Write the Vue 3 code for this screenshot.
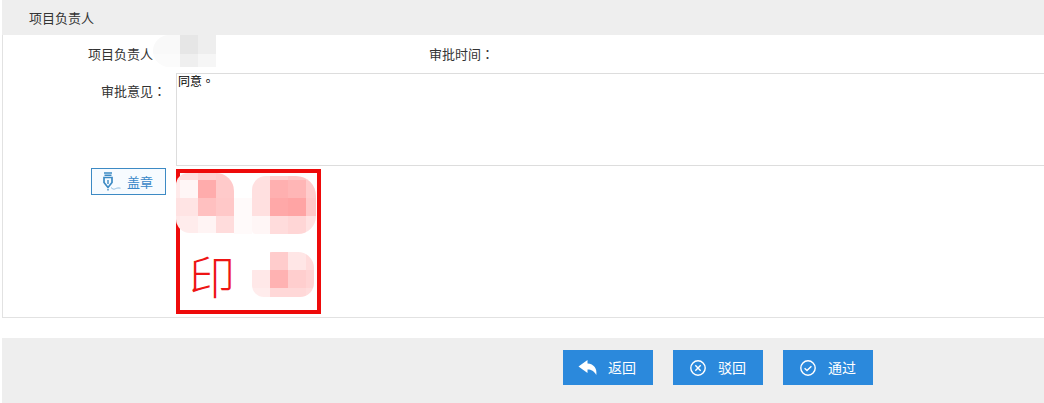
<template>
  <div class="page">
    <div class="panel-head">项目负责人</div>
    <div class="panel-body">
      <div class="row info-row">
        <span class="label name-label">项目负责人</span>
        <div class="name-value">
          <div class="mosaic name-mosaic" :style="gridStyle(nameMosaic)">
            <i v-for="(c, i) in nameMosaic.cells" :key="i" :style="{ background: c }"></i>
          </div>
        </div>
        <span class="label">审批时间<span class="colon">：</span></span>
      </div>
      <div class="row opinion-row">
        <span class="label opinion-label">审批意见<span class="colon">：</span></span>
        <textarea class="opinion" readonly>同意。</textarea>
      </div>
      <div class="row stamp-row">
        <div class="stamp-side">
          <button class="stamp-btn">
            <svg width="18" height="19" viewBox="0 0 18 19" fill="none" stroke="#3d8ac4">
              <path d="M1 1h8M1.500 3.200h7" stroke-width="1.500" />
              <path d="M1 5.500h8v5L5 15.500 1 10.500z" stroke-width="1.700" stroke-linejoin="miter" />
              <path d="M5 8v4" stroke-width="1.400" />
              <path d="M5 17v1.500" stroke-width="1.400" />
              <path d="M8 15.500c1.600 1.800 3 2 4.500 1.200s3-.9 5-.5" stroke="#8dbce0" stroke-width="1" />
            </svg>
            <span>盖章</span>
          </button>
        </div>
        <div class="seal">
          <div
            v-for="(m, n) in sealMosaics"
            :key="n"
            class="mosaic"
            :class="m.cls"
            :style="gridStyle(m)"
          >
            <i v-for="(c, i) in m.cells" :key="i" :style="{ background: c }"></i>
          </div>
          <div class="seal-gap"></div>
          <span class="seal-char">印</span>
        </div>
      </div>
    </div>
    <div class="footer">
      <button class="action" v-for="b in actions" :key="b.text">
        <span class="action-icon">
          <svg v-if="b.icon === 'back'" width="20" height="15" viewBox="0 0 20 15">
            <path d="M9.500 0 .5 6.500l9 6.500V9.500c3.600-.1 6.400 1.200 8.800 5.500C19.300 8.500 16 4 9.500 3.500z" fill="#fff" />
          </svg>
          <svg v-else-if="b.icon === 'close'" width="16" height="16" viewBox="0 0 16 16" fill="none" stroke="#fff" stroke-width="1.400">
            <circle cx="8" cy="8" r="7.200" />
            <path d="M5.300 5.300l5.400 5.400M10.700 5.300l-5.400 5.400" />
          </svg>
          <svg v-else width="16" height="16" viewBox="0 0 16 16" fill="none" stroke="#fff" stroke-width="1.400">
            <circle cx="8" cy="8" r="7.200" />
            <path d="M4.600 8.200l2.400 2.300 4.400-4.200" />
          </svg>
        </span>
        <span class="action-text">{{ b.text }}</span>
      </button>
    </div>
  </div>
</template>

<script setup>
const actions = [
  { text: '返回', icon: 'back' },
  { text: '驳回', icon: 'close' },
  { text: '通过', icon: 'check' },
]

// pixelated blur over the private bits of the seal and the name
const nameMosaic = {
  cols: [27, 18, 18],
  rows: [19, 13],
  cells: ['#f9f9f9', '#e6e6e6', '#eeeeee', '#fbfbfb', '#efefef', '#f6f6f6'],
}

const sealMosaics = [
  {
    cls: 'seal-a',
    cols: [4, 18, 18, 18],
    rows: [7, 18, 18, 17],
    cells: [
      '#ffe2e2', '#ffdede', '#ffd0d0', '#ffcccc',
      '#ffeaea', '#fff6f6', '#ffacac', '#ffcaca',
      '#ffe2e2', '#ffe4e4', '#ffc0c0', '#ffc8c8',
      '#ffe8e8', '#ffecec', '#fff4f4', '#ffdcdc',
    ],
  },
  {
    cls: 'seal-b',
    cols: [18, 18, 18, 10],
    rows: [4, 18, 18, 18],
    cells: [
      '#ffe4e4', '#ffd0d0', '#ffc8c8', '#ffd4d4',
      '#ffe0e0', '#ffb0b0', '#ffb6b6', '#ffcccc',
      '#ffe0e0', '#ffa8a8', '#ffa4a4', '#ffc8c8',
      '#fff6f6', '#ffdcdc', '#ffd6d6', '#ffe2e2',
    ],
  },
  {
    cls: 'seal-c',
    cols: [18, 18, 18, 8],
    rows: [18, 18, 9],
    cells: [
      '#fff', '#ffcccc', '#ffe6e6', '#ffdcdc',
      '#ffe8e8', '#ffb2b2', '#ffcece', '#ffd4d4',
      '#ffecec', '#ffd8d8', '#ffd8d8', '#ffdcdc',
    ],
  },
]

const gridStyle = (m) => ({
  gridTemplateColumns: m.cols.map((w) => w + 'px').join(' '),
  gridTemplateRows: m.rows.map((h) => h + 'px').join(' '),
})
</script>

<style>
html,
body {
  margin: 0;
  background: #fff;
  overflow: hidden;
}
</style>

<style scoped>
.page {
  width: 1044px;
  height: 403px;
  overflow: hidden;
  padding-left: 2px;
  box-sizing: border-box;
  font-family: "Noto Sans CJK SC", "Liberation Sans", sans-serif;
  font-size: 13px;
  color: #333;
}

.panel-head {
  height: 35px;
  line-height: 36px;
  padding-left: 27px;
  background: #eee;
}

.panel-body {
  height: 283px;
  box-sizing: border-box;
  border-left: 1px solid #e2e2e2;
  border-bottom: 1px solid #e2e2e2;
}

.row {
  display: flex;
}

.label {
  flex-shrink: 0;
  white-space: nowrap;
}

.colon {
  font-family: "Noto Sans CJK TC", sans-serif;
}

.info-row {
  height: 38px;
  align-items: flex-start;
  line-height: 38px;
}

.name-label {
  width: 150px;
  text-align: right;
}

.name-value {
  width: 276px;
  height: 32px;
  flex-shrink: 0;
}

.mosaic {
  display: grid;
  overflow: hidden;
}

.mosaic i {
  display: block;
}

.name-mosaic {
  width: 63px;
  height: 32px;
  border-radius: 16px 0 0 16px;
}

.opinion-row {
  height: 93px;
}

.opinion-label {
  width: 163px;
  padding-top: 9px;
  line-height: 18px;
  text-align: right;
}

.opinion {
  display: block;
  flex-shrink: 0;
  width: 900px;
  height: 93px;
  margin: 0 0 0 10px;
  padding: 0 1px;
  box-sizing: border-box;
  border: 1px solid #ddd;
  resize: none;
  outline: none;
  font-family: "Noto Sans CJK TC", sans-serif;
  font-size: 12px;
  line-height: 13px;
  color: #000;
}

.stamp-row {
  padding-top: 3px;
}

.stamp-side {
  width: 163px;
  padding-left: 88px;
  margin-top: -1px;
  box-sizing: border-box;
  flex-shrink: 0;
}

.stamp-btn {
  display: flex;
  align-items: center;
  gap: 6px;
  width: 75px;
  height: 27px;
  padding: 0 0 0 11px;
  box-sizing: border-box;
  border: 1px solid #3d8ac4;
  background: #f7fbff;
  font-family: inherit;
  font-size: 13px;
  color: #3a87c8;
}

.seal {
  position: relative;
  width: 145px;
  height: 145px;
  margin-left: 10px;
  box-sizing: border-box;
  border: 4px solid #ee0a0a;
}

.seal-a,
.seal-b,
.seal-c,
.seal-gap {
  position: absolute;
}

.seal-a {
  left: -4px;
  top: 0;
  width: 58px;
  height: 60px;
  border-radius: 12px 18px 0 14px;
}

.seal-b {
  left: 72px;
  top: 3px;
  width: 64px;
  height: 58px;
  border-radius: 14px 20px 18px 4px;
}

.seal-c {
  left: 72px;
  top: 79px;
  width: 62px;
  height: 45px;
  border-radius: 20px 16px 14px 12px;
}

.seal-gap {
  left: 54px;
  top: 25px;
  width: 18px;
  height: 36px;
  background: #fffafa;
}

.seal-char {
  position: absolute;
  left: 9px;
  top: 71px;
  font-size: 46px;
  font-weight: 300;
  line-height: 60px;
  color: #ee1414;
}

.footer {
  display: flex;
  gap: 20px;
  height: 65px;
  margin-top: 20px;
  padding: 12px 0 0 561px;
  box-sizing: border-box;
  background: #eee;
}

.action {
  display: flex;
  align-items: center;
  width: 90px;
  height: 35px;
  padding: 0;
  border: 0;
  background: #2b89dc;
  font-family: inherit;
  font-size: 14px;
  color: #fff;
}

.action-icon {
  display: flex;
  justify-content: center;
  width: 45px;
  padding-left: 5px;
  box-sizing: border-box;
  flex-shrink: 0;
}

.action-text {
  margin-top: -2px;
}
</style>
